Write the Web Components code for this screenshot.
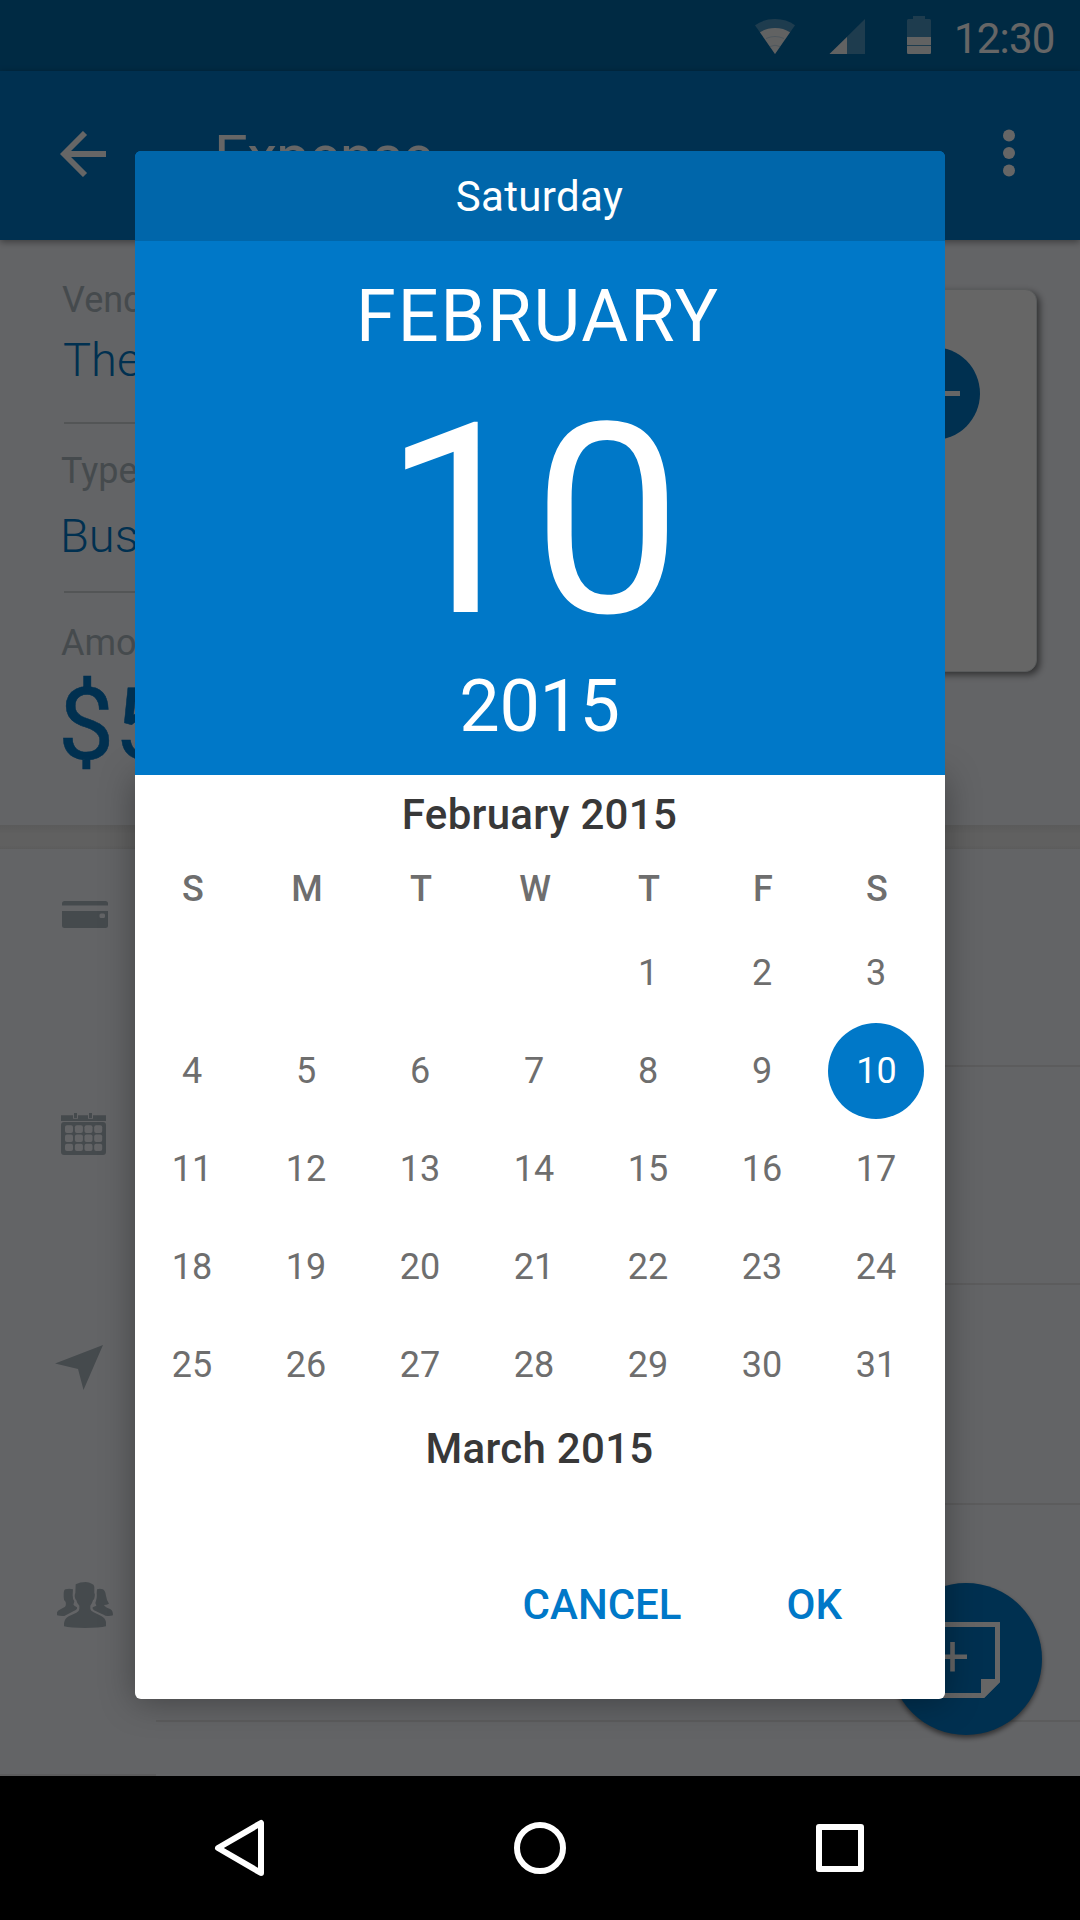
<!DOCTYPE html>
<html lang="en">
<head>
<meta charset="utf-8">
<title>Expense</title>
<style>
html,body{margin:0;padding:0;background:#000}
body{width:1080px;height:1920px;overflow:hidden;font-family:Roboto,sans-serif}
</style>
</head>
<body>
<expense-screen></expense-screen>
<script>
const define = (name, css, html) => customElements.define(name, class extends HTMLElement {
  constructor() {
    super();
    this.attachShadow({mode: 'open'}).innerHTML = `<style>*{box-sizing:border-box}svg{display:block}${css}</style>${typeof html === 'function' ? html(this) : html}`;
  }
});

define('status-bar', `
:host{display:flex;height:71px;background:#0069a8;color:#fff;align-items:flex-start}
svg{flex:none;margin-left:740px}
span{font-size:42px;line-height:50px;margin:13.500px 0 0 12px;letter-spacing:-.8px}`, `
<svg width="202" height="71" viewBox="740 0 202 71">
 <g fill="#fff" fill-opacity=".3">
  <path d="M775 54L755 25.2Q763.5 19 775 19T795 25.2Z"/>
  <path d="M865 19V54H829.5Z"/>
  <path d="M913 16h12v3h4.500a1.500 1.500 0 0 1 1.500 1.500V52.500a1.500 1.500 0 0 1-1.500 1.500h-21a1.500 1.500 0 0 1-1.500-1.500v-32a1.500 1.500 0 0 1 1.500-1.500h4.500z"/>
 </g>
 <g fill="#f3f5f6">
  <path d="M775 54L760 32.300Q766.500 28 775 28T790 32.300Z"/>
  <path d="M847 37V54H829.500Z"/>
  <path d="M907 37h24v8h-24zM907 46h24v6.500a1.500 1.500 0 0 1-1.500 1.500h-21a1.500 1.500 0 0 1-1.500-1.500z"/>
 </g>
 <path d="M766 38.500Q775 34.500 784 38.500M770 46.500Q775 44 780 46.500" fill="none" stroke="#0069a8" stroke-opacity=".25" stroke-width=".8"/>
</svg><span>12:30</span>`);

define('app-bar', `
:host{display:flex;height:169px;background:#0078c8;color:#fff;position:relative;box-shadow:0 2px 7px rgba(0,0,0,.4)}
.back{margin:60px 0 0 60px}
h1{font:400 60px/70px Roboto,sans-serif;letter-spacing:-.9px;margin:51px auto 0 108px}
.more{margin:58px 65px 0 0}`, `
<svg class="back" width="46" height="46" viewBox="0 0 46 46" fill="none" stroke="#fff" stroke-width="5.800"><path d="M46 23H4.500M25 2L4 23L25 44"/></svg>
<h1><slot></slot></h1>
<svg class="more" width="12" height="48" viewBox="0 0 12 48" fill="#fff"><circle cx="6" cy="6.500" r="6"/><circle cx="6" cy="24" r="6"/><circle cx="6" cy="41.500" r="6"/></svg>`);

define('expense-field', `
:host{display:block;color:#0078c8}
label{display:block;font-size:36px;line-height:44px;color:#adb9c1;margin-left:var(--lx,0)}
div{font-weight:300;font-size:47px;line-height:56px;margin-top:var(--gap,11px)}
:host([amount]) div{font-weight:400;font-size:100px;line-height:120px;margin:0 0 0 -5px;-webkit-text-stroke:.5px #0078c8}`,
el => `<label>${el.getAttribute('label')}</label><div><slot></slot></div>`);

define('receipt-card', `
:host{display:flex;justify-content:flex-end;width:340px;height:383px;margin:49px 43px 0 0;padding:57px 56px 0 0;background:#fff;border:1px solid #dfe4e6;border-radius:12px;box-shadow:3px 3px 7px rgba(0,0,0,.5)}`, `
<svg width="93" height="93" viewBox="0 0 93 93"><circle cx="46.500" cy="46.500" r="46.500" fill="#0078c8"/><path d="M20 46.500H73" stroke="#fff" stroke-width="5"/></svg>`);

define('expense-details', `
:host{display:flex;justify-content:space-between;height:585px;background:#f8faff}
.fields{width:480px;padding:38px 0 0 63px}
hr{border:0;height:2px;background:#d0d5d8;margin:0 0 0 1px}`, `
<div class="fields">
<expense-field label="Vendor" style="--gap:10px;--lx:-1px">The</expense-field>
<hr style="margin-top:34px;margin-bottom:25px">
<expense-field label="Type" style="--gap:15px;--lx:1px;margin-left:-3px">Business</expense-field>
<hr style="margin-top:27px;margin-bottom:28px">
<expense-field amount label="Amount" style="--lx:-2px">$5</expense-field>
</div>
<receipt-card></receipt-card>`);

define('list-row', `
:host{display:grid;grid-template-columns:156px 1fr;height:219px;background:#f8faff;color:#adb9c1}
.line{border-bottom:2px solid #e6e7e9}`, `<slot></slot><div class="line"></div>`);

define('expense-list', `
:host{display:block;background:#f8faff;height:927px}`, `
<list-row style="height:218px"><svg style="margin:52px 0 0 62px" width="46" height="27" viewBox="0 0 46 27" fill="currentColor"><path d="M0 4.500V2.500A2.500 2.500 0 0 1 2.500 0H43.500A2.500 2.500 0 0 1 46 2.500V4.500Z"/><path fill-rule="evenodd" d="M0 10H46V24.500A2.500 2.500 0 0 1 43.500 27H2.500A2.500 2.500 0 0 1 0 24.500ZM39 12.500A1.500 1.500 0 0 0 37.500 14V15.500A1.500 1.500 0 0 0 39 17H41.500A1.500 1.500 0 0 0 43 15.500V14A1.500 1.500 0 0 0 41.500 12.500Z"/></svg></list-row>
<list-row style="height:218px"><svg style="margin:46px 0 0 61px" width="45" height="42" viewBox="0 0 45 42" fill="currentColor">
<path d="M0 2.300H12V5.700H17V2.300H27V5.700H32V2.300H45V8H0Z"/><path d="M13 0h3v5h-3zM28 0h3v5h-3z"/><rect y="9" width="45" height="33" rx="3"/>
<g fill="#f8faff"><rect x="4" y="12.300" width="8" height="7.700" rx="2"/><rect x="13.900" y="12.300" width="8" height="7.700" rx="2"/><rect x="23.500" y="12.300" width="8" height="7.700" rx="2"/><rect x="33.200" y="12.300" width="8" height="7.700" rx="2"/><rect x="4" y="21.600" width="8" height="7.300" rx="2"/><rect x="13.900" y="21.600" width="8" height="7.300" rx="2"/><rect x="23.500" y="21.600" width="8" height="7.300" rx="2"/><rect x="33.200" y="21.600" width="8" height="7.300" rx="2"/><rect x="4" y="30.700" width="8" height="7.300" rx="2"/><rect x="13.900" y="30.700" width="8" height="7.300" rx="2"/><rect x="23.500" y="30.700" width="8" height="7.300" rx="2"/><rect x="33.200" y="30.700" width="8" height="7.300" rx="2"/></g></svg></list-row>
<list-row style="height:220px"><svg style="margin:60px 0 0 55px" width="48" height="45" viewBox="0 0 48 45" fill="currentColor"><path d="M48 0L28.500 45L23 24L0 18.500Z"/></svg></list-row>
<list-row style="height:217px"><svg style="margin:77px 0 0 57px" width="56" height="46" viewBox="171 846 168 138" fill="currentColor">
<path d="M227 853Q240 846 257 846Q268 846 275 851Q282 852 283 860V878Q286 882 284 890Q283 899 279 901Q276 912 271 917V927Q272 933 281 937L304 948Q316 954 318 966V979Q300 984 255 984Q210 984 192 979V970Q194 955 206 949L229 938Q238 933 238 927V917Q231 911 229 901Q225 898 224 889Q224 883 226 879Z"/>
<path d="M196 868Q208 864 219 868L218 886Q218 897 223 904Q222 911 220 913Q221 918 231 922V926Q228 930 223 932L193 948Q180 949 171 946V937Q173 931 183 927L194 921Q199 918 197 906Q190 899 191 891V883Q191 870 196 868Z"/>
<path d="M291 868Q299 865 309 868Q316 872 318 887Q320 901 327 911Q320 915 312 915Q313 919 321 923L332 928Q339 933 339 946Q330 949 316 947Q312 944 304 941L282 931L278 926V922L289 917L286 909Q288 903 290 893Q291 886 290 880Z"/></svg></list-row>
<list-row style="height:54px"></list-row>`);

define('section-gap', `:host{display:block;height:24px;background:linear-gradient(#e2e2e2,#f0f0f0 9px,#f0f0f0 20px,#e6e6e6)}`, ``);

define('add-note-button', `
:host{position:absolute;left:890px;top:1583px;width:152px;height:152px;border-radius:50%;background:#0078c8;box-shadow:0 3px 5px rgba(0,0,0,.5)}`, `
<svg width="152" height="152" viewBox="890 1583 152 152" fill="none" stroke="#fff"><path d="M934.500 1624.500H997.500V1681L983 1695.500H934.500Z" stroke-width="5"/><path d="M981 1679H1000V1682L984 1698H981Z" fill="#fff" stroke="none"/><path d="M938 1656.700H967M952.500 1642V1671.500" stroke-width="4.600"/></svg>`);

define('picker-header', `
:host{display:block;position:relative;z-index:1;color:#fff;background:#0078c8;height:624px;border-radius:6px 6px 0 0;overflow:hidden;text-align:center}
.dow{height:90px;background:#0066aa;font-size:42px;line-height:91px;padding-right:1px;letter-spacing:.35px}
.month,.year{font-size:72px;line-height:84px;margin-top:34px}
.month{letter-spacing:1.900px;padding-right:4px}
.day{font-size:266px;line-height:266px;margin-top:29px;padding-right:15px}
.year{margin-top:11px;padding-right:1px;letter-spacing:-.4px}`, el => `
<div class="dow">${el.getAttribute('weekday')}</div><div class="month">${el.getAttribute('month')}</div><div class="day">${el.getAttribute('day')}</div><div class="year">${el.getAttribute('year')}</div>`);

define('month-title', `:host{display:block;text-align:center;font-weight:500;font-size:42px;line-height:50px;color:#383838;padding-right:1px;letter-spacing:.3px}`, `<slot></slot>`);

define('month-grid', `
:host{display:block;color:#6e6e6e;font-size:36px;padding-right:12px;text-align:center}
div{display:grid;grid-template-columns:repeat(7,114px)}
.head{font-weight:500;line-height:44px;padding-left:1px}
.days{grid-auto-rows:98px;margin-top:13px;line-height:96px}
span{width:96px;height:96px;margin:1px 9px;border-radius:50%}
.on{background:#0078c8;color:#fff;padding-left:1px}`, el => {
  const first = +el.getAttribute('offset'), sel = +el.getAttribute('selected');
  let days = '';
  for (let d = 1; d <= 31; d++) days += `<span class="${d === sel ? 'on' : ''}"${d === 1 ? ` style="grid-column-start:${first + 1}"` : ''}>${d}</span>`;
  return `<div class="head">${[...'SMTWTFS'].map(c => `<b style="font-weight:500">${c}</b>`).join('')}</div><div class="days">${days}</div>`;
});

define('flat-button', `:host{display:block;color:#0078c8;font-weight:500;font-size:42px;line-height:50px}`, `<slot></slot>`);

define('date-picker', `
:host{display:flex;flex-direction:column;width:810px;height:1548px;border-radius:6px}
.body{flex:1;background:#fff;border-radius:0 0 6px 6px;box-shadow:0 2px 34px rgba(0,0,0,.34);padding-top:15px}
month-grid{margin:27px 0 10px}
.actions{display:flex;justify-content:flex-end;gap:105px;margin-top:106px;padding-right:103px}`, `
<picker-header weekday="Saturday" month="FEBRUARY" day="10" year="2015"></picker-header>
<div class="body">
<month-title>February 2015</month-title>
<month-grid offset="4" selected="10"></month-grid>
<month-title>March 2015</month-title>
<div class="actions"><flat-button>CANCEL</flat-button><flat-button>OK</flat-button></div>
</div>`);

define('modal-scrim', `
:host{position:absolute;left:0;top:0;width:1080px;height:1776px;box-sizing:border-box;background:rgba(0,0,0,.6);display:flex;justify-content:center;align-items:flex-start;padding-top:151px;overflow:hidden;z-index:2}`, `<slot></slot>`);

define('system-nav', `
:host{display:flex;height:144px;background:#000;align-items:center;padding-left:212px;position:relative;z-index:3}`, `
<svg width="656" height="60" viewBox="212 1818 656 60" fill="none" stroke="#fff" stroke-width="6" stroke-linejoin="round"><path d="M261 1823V1873L218 1848Z"/><circle cx="540" cy="1848" r="23"/><rect x="819" y="1827" width="42" height="42"/></svg>`);

define('expense-screen', `
:host{display:flex;flex-direction:column;position:relative;width:1080px;height:1920px;overflow:hidden}
:host>*{flex:none}`, `
<status-bar></status-bar>
<app-bar>Expense</app-bar>
<expense-details></expense-details>
<section-gap></section-gap>
<expense-list></expense-list>
<add-note-button></add-note-button>
<modal-scrim><date-picker></date-picker></modal-scrim>
<system-nav></system-nav>`);
</script>
</body>
</html>
